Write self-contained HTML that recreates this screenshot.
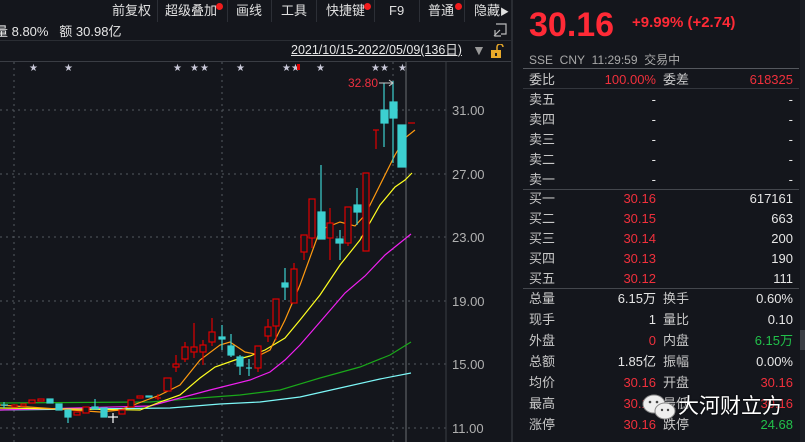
<!DOCTYPE html>
<html><head><meta charset="utf-8">
<style>
*{margin:0;padding:0;box-sizing:border-box}
body{width:805px;height:442px;background:#14161c;overflow:hidden;position:relative;font-family:"Liberation Sans","Noto Sans CJK SC",sans-serif;color:#d8d8d8}
.t{position:absolute;white-space:nowrap;font-size:13px;line-height:16px}
.tb{color:#e0e0e0}
.sep{position:absolute;top:0;width:1px;height:22px;background:#2c2f36}
.dot{position:absolute;width:7px;height:7px;border-radius:50%;background:#f01c1c}
.r{color:#f0303c}.g{color:#22c04a}.w{color:#e6e6e6}.gy{color:#a8a8a8}
.lbl{color:#c8c8c8}
.hl{position:absolute;height:1px;background:#33363d}
</style></head><body>
<!-- toolbar -->
<div class="t tb" style="left:112px;top:3px">前复权</div>
<div class="sep" style="left:157px"></div>
<div class="t tb" style="left:165px;top:3px">超级叠加</div><div class="dot" style="left:216px;top:3px"></div>
<div class="sep" style="left:227px"></div>
<div class="t tb" style="left:236px;top:3px">画线</div>
<div class="sep" style="left:271px"></div>
<div class="t tb" style="left:281px;top:3px">工具</div>
<div class="sep" style="left:316px"></div>
<div class="t tb" style="left:326px;top:3px">快捷键</div><div class="dot" style="left:364px;top:3px"></div>
<div class="sep" style="left:374px"></div>
<div class="t tb" style="left:389px;top:3px">F9</div>
<div class="sep" style="left:419px"></div>
<div class="t tb" style="left:428px;top:3px">普通</div><div class="dot" style="left:455px;top:3px"></div>
<div class="sep" style="left:464px"></div>
<div class="t tb" style="left:474px;top:3px">隐藏<span style="font-size:9px">▶</span></div>
<div class="t w" style="left:-5px;top:24px">量 8.80%&nbsp;&nbsp; 额 30.98亿</div>
<svg style="position:absolute;left:492px;top:22px" width="16" height="16"><path d="M4 2h10v10h-5M2 14l6-6M3 8v6h6" stroke="#bbb" fill="none" stroke-width="1.2"/></svg>
<div class="hl" style="left:0;top:40px;width:512px;background:#2a2d33"></div>
<div class="t w" style="left:291px;top:42px;text-decoration:underline;font-size:12.5px">2021/10/15-2022/05/09(136日)</div>
<div class="t" style="left:472px;top:42px;color:#999;font-size:14px">▼</div>
<svg style="position:absolute;left:490px;top:44px" width="16" height="16"><path d="M7 6V3a3 3 0 0 1 6 0" stroke="#e8a92a" fill="none" stroke-width="1.5"/><rect x="1" y="6" width="10" height="8" fill="#e8a92a"/><rect x="5" y="9" width="2" height="3" fill="#222"/></svg>
<div class="hl" style="left:0;top:61px;width:512px;background:#3a3d44"></div>
<div style="position:absolute;left:511px;top:0;width:2px;height:442px;background:#2a2d33"></div>

<svg style="position:absolute;left:0;top:62px" width="511" height="380" viewBox="0 62 511 380">
<g stroke="#555a60" stroke-dasharray="2,4" stroke-width="1">
<line x1="0" y1="110" x2="446" y2="110"/><line x1="0" y1="174" x2="446" y2="174"/><line x1="0" y1="237" x2="446" y2="237"/><line x1="0" y1="301" x2="446" y2="301"/><line x1="0" y1="364" x2="446" y2="364"/><line x1="0" y1="428" x2="446" y2="428"/>
<line x1="14" y1="62" x2="14" y2="442"/><line x1="222" y1="62" x2="222" y2="442"/><line x1="393" y1="62" x2="393" y2="442"/>
</g>
<line x1="446" y1="62" x2="446" y2="442" stroke="#3a3d44"/>
<line x1="406" y1="62" x2="406" y2="442" stroke="#6a6d72"/>
<g font-family="Liberation Sans" font-size="13" fill="#b0b0b0">
<text x="452" y="115">31.00</text><text x="452" y="179">27.00</text><text x="452" y="242">23.00</text><text x="452" y="306">19.00</text><text x="452" y="369">15.00</text><text x="452" y="433">11.00</text>
</g>
<g fill="#c8c8d8" font-size="10" font-family="DejaVu Sans">
<text x="29" y="71">★</text><text x="64" y="71">★</text><text x="173" y="71">★</text><text x="190" y="71">★</text><text x="200" y="71">★</text><text x="236" y="71">★</text><text x="282" y="71">★</text><text x="291" y="71">★</text><text x="316" y="71">★</text><text x="371" y="71">★</text><text x="380" y="71">★</text><text x="398" y="71">★</text>
</g>
<rect x="297" y="64" width="3" height="6" fill="#d00"/>
<!-- MAs -->
<g fill="none" stroke-width="1.2">
<polyline stroke="#7df8f8" points="0,410 170,408 220,404 260,402 300,397 340,388 380,379 411,373"/>
<polyline stroke="#1aa81a" points="0,403 150,402 200,398 240,395 280,390 320,378 360,367 390,355 411,342"/>
<polyline stroke="#f020f0" points="0,410 150,406 180,398 210,390 250,380 270,372 285,360 300,345 320,322 345,293 365,276 385,255 411,234"/>
<polyline stroke="#ffff20" points="0,408 140,410 160,402 180,395 200,378 215,367 235,360 250,356 265,350 285,338 300,320 320,295 340,265 360,240 380,205 395,187 405,180 412,173"/>
<polyline stroke="#ff9a10" points="0,405 100,412 120,410 160,395 180,385 200,360 220,345 230,342 245,352 260,355 270,350 285,320 300,285 320,230 340,222 355,226 365,215 380,185 395,155 405,138 415,130"/>
</g>
<!-- candles -->
<g stroke="#e00000" fill="#14161c" stroke-width="1.2">
<rect x="12" y="405" width="5" height="2"/><rect x="21" y="404" width="5" height="2"/><rect x="29" y="400" width="6" height="3"/><rect x="38" y="399" width="6" height="2"/>
<rect x="74" y="412" width="6" height="3"/><rect x="83" y="407" width="6" height="6"/><rect x="119" y="410" width="6" height="4"/><rect x="128" y="400" width="6" height="7"/><rect x="137" y="396" width="6" height="2"/>
<line x1="158" y1="394" x2="158" y2="400"/><line x1="155" y1="398" x2="161" y2="398"/>
<rect x="164" y="378" width="7" height="13"/><line x1="176" y1="355" x2="176" y2="372"/><rect x="173" y="364" width="6" height="3"/>
<line x1="185" y1="342" x2="185" y2="362"/><rect x="182" y="347" width="6" height="12"/>
<line x1="194" y1="323" x2="194" y2="358"/><rect x="191" y="347" width="6" height="5"/>
<line x1="203" y1="340" x2="203" y2="365"/><rect x="200" y="345" width="6" height="7"/>
<line x1="212" y1="318" x2="212" y2="346"/><rect x="209" y="332" width="6" height="10"/>
<line x1="258" y1="346" x2="258" y2="372"/><rect x="255" y="346" width="6" height="22"/>
<line x1="268" y1="319" x2="268" y2="342"/><rect x="265" y="327" width="6" height="9"/>
<line x1="276" y1="299" x2="276" y2="340"/><rect x="273" y="299" width="6" height="27"/>
<line x1="294" y1="263" x2="294" y2="303"/><rect x="291" y="269" width="6" height="34"/>
<line x1="304" y1="235" x2="304" y2="260"/><rect x="301" y="235" width="6" height="17"/>
<line x1="312" y1="199" x2="312" y2="248"/><rect x="309" y="199" width="6" height="39"/>
<line x1="330" y1="208" x2="330" y2="260"/><rect x="327" y="223" width="6" height="15"/>
<line x1="348" y1="207" x2="348" y2="246"/><rect x="345" y="207" width="6" height="36"/>
<rect x="363" y="173" width="6" height="78"/>
<line x1="376" y1="130" x2="376" y2="149"/><line x1="373" y1="130" x2="379" y2="130"/>
<line x1="408" y1="123" x2="415" y2="123"/>
</g>
<g stroke="#3cd0d0" fill="#3cd0d0" stroke-width="1.2">
<line x1="1" y1="405" x2="8" y2="405"/><line x1="4" y1="402" x2="4" y2="408"/>
<rect x="47" y="399" width="6" height="4"/><rect x="56" y="404" width="6" height="6"/>
<line x1="68" y1="410" x2="68" y2="423"/><rect x="65" y="410" width="6" height="7"/>
<line x1="95" y1="399" x2="95" y2="409"/><rect x="92" y="407" width="6" height="2"/>
<rect x="101" y="408" width="6" height="9"/><rect x="146" y="396" width="6" height="1"/>
<line x1="222" y1="325" x2="222" y2="350"/><rect x="219" y="337" width="6" height="2"/>
<line x1="231" y1="334" x2="231" y2="357"/><rect x="228" y="346" width="6" height="9"/>
<line x1="240" y1="355" x2="240" y2="375"/><rect x="237" y="357" width="6" height="9"/>
<line x1="249" y1="359" x2="249" y2="376"/><line x1="246" y1="368" x2="252" y2="368"/>
<line x1="285" y1="268" x2="285" y2="300"/><rect x="282" y="283" width="6" height="4"/>
<line x1="321" y1="165" x2="321" y2="239"/><rect x="318" y="212" width="7" height="27"/>
<line x1="340" y1="230" x2="340" y2="260"/><rect x="336" y="239" width="7" height="4"/>
<line x1="357" y1="188" x2="357" y2="225"/><rect x="354" y="205" width="7" height="7"/>
<line x1="384" y1="83" x2="384" y2="147"/><rect x="381" y="110" width="7" height="13"/>
<line x1="393" y1="81" x2="393" y2="163"/><rect x="390" y="102" width="7" height="16"/>
<rect x="398" y="125" width="8" height="42"/>
</g>
<g stroke="#fff" stroke-width="1.2"><line x1="113" y1="413" x2="113" y2="423"/><line x1="108" y1="417" x2="118" y2="417"/></g>
<text x="348" y="87" font-family="Liberation Sans" font-size="12" fill="#f03040">32.80</text>
<path d="M379 83H393M389 80l4 3-4 3" stroke="#ccc" fill="none"/>
</svg>

<!-- right panel -->
<div class="t r" style="left:529px;top:6px;font-size:34px;line-height:38px;font-weight:bold;color:#ff2a36">30.16</div>
<div class="t r" style="left:632px;top:15px;font-size:15px;font-weight:bold;color:#ff2a36">+9.99% (+2.74)</div>
<div class="t gy" style="left:529px;top:52px;font-size:12px">SSE&nbsp; CNY&nbsp; 11:29:59&nbsp; 交易中</div>
<div class="hl" style="left:523px;top:68px;width:276px;background:#55585e"></div>
<div class="hl" style="left:523px;top:88px;width:276px"></div>
<div class="hl" style="left:523px;top:189px;width:276px;background:#44474d"></div>
<div class="hl" style="left:523px;top:288px;width:276px;background:#44474d"></div>
<div style="position:absolute;left:800px;top:0;width:5px;height:442px;background:#1b1e24"></div>
<div style="position:absolute;left:800px;top:330px;width:5px;height:20px;background:#3a3d44"></div>
<div id="rows"></div>
<div style="position:absolute;left:0;top:0">
<!-- 委比 -->
<div class="t lbl" style="left:529px;top:72px">委比</div><div class="t r" style="left:600px;width:56px;top:72px;text-align:right">100.00%</div><div class="t lbl" style="left:663px;top:72px">委差</div><div class="t r" style="left:700px;width:93px;top:72px;text-align:right">618325</div>
<div class="t lbl" style="left:529px;top:92px">卖五</div><div class="t w" style="left:640px;width:16px;top:92px;text-align:right">-</div><div class="t w" style="left:700px;width:93px;top:92px;text-align:right">-</div>
<div class="t lbl" style="left:529px;top:112px">卖四</div><div class="t w" style="left:640px;width:16px;top:112px;text-align:right">-</div><div class="t w" style="left:700px;width:93px;top:112px;text-align:right">-</div>
<div class="t lbl" style="left:529px;top:132px">卖三</div><div class="t w" style="left:640px;width:16px;top:132px;text-align:right">-</div><div class="t w" style="left:700px;width:93px;top:132px;text-align:right">-</div>
<div class="t lbl" style="left:529px;top:152px">卖二</div><div class="t w" style="left:640px;width:16px;top:152px;text-align:right">-</div><div class="t w" style="left:700px;width:93px;top:152px;text-align:right">-</div>
<div class="t lbl" style="left:529px;top:172px">卖一</div><div class="t w" style="left:640px;width:16px;top:172px;text-align:right">-</div><div class="t w" style="left:700px;width:93px;top:172px;text-align:right">-</div>
<div class="t lbl" style="left:529px;top:191px">买一</div><div class="t r" style="left:600px;width:56px;top:191px;text-align:right">30.16</div><div class="t w" style="left:700px;width:93px;top:191px;text-align:right">617161</div>
<div class="t lbl" style="left:529px;top:211px">买二</div><div class="t r" style="left:600px;width:56px;top:211px;text-align:right">30.15</div><div class="t w" style="left:700px;width:93px;top:211px;text-align:right">663</div>
<div class="t lbl" style="left:529px;top:231px">买三</div><div class="t r" style="left:600px;width:56px;top:231px;text-align:right">30.14</div><div class="t w" style="left:700px;width:93px;top:231px;text-align:right">200</div>
<div class="t lbl" style="left:529px;top:251px">买四</div><div class="t r" style="left:600px;width:56px;top:251px;text-align:right">30.13</div><div class="t w" style="left:700px;width:93px;top:251px;text-align:right">190</div>
<div class="t lbl" style="left:529px;top:271px">买五</div><div class="t r" style="left:600px;width:56px;top:271px;text-align:right">30.12</div><div class="t w" style="left:700px;width:93px;top:271px;text-align:right">111</div>

<div class="t lbl" style="left:529px;top:291px">总量</div><div class="t w" style="left:580px;width:76px;top:291px;text-align:right">6.15万</div><div class="t lbl" style="left:663px;top:291px">换手</div><div class="t w" style="left:700px;width:93px;top:291px;text-align:right">0.60%</div>
<div class="t lbl" style="left:529px;top:312px">现手</div><div class="t w" style="left:580px;width:76px;top:312px;text-align:right">1</div><div class="t lbl" style="left:663px;top:312px">量比</div><div class="t w" style="left:700px;width:93px;top:312px;text-align:right">0.10</div>
<div class="t lbl" style="left:529px;top:333px">外盘</div><div class="t r" style="left:580px;width:76px;top:333px;text-align:right">0</div><div class="t lbl" style="left:663px;top:333px">内盘</div><div class="t g" style="left:700px;width:93px;top:333px;text-align:right">6.15万</div>
<div class="t lbl" style="left:529px;top:354px">总额</div><div class="t w" style="left:580px;width:76px;top:354px;text-align:right">1.85亿</div><div class="t lbl" style="left:663px;top:354px">振幅</div><div class="t w" style="left:700px;width:93px;top:354px;text-align:right">0.00%</div>
<div class="t lbl" style="left:529px;top:375px">均价</div><div class="t r" style="left:580px;width:76px;top:375px;text-align:right">30.16</div><div class="t lbl" style="left:663px;top:375px">开盘</div><div class="t r" style="left:700px;width:93px;top:375px;text-align:right">30.16</div>
<div class="t lbl" style="left:529px;top:396px">最高</div><div class="t r" style="left:580px;width:76px;top:396px;text-align:right">30.16</div><div class="t lbl" style="left:663px;top:396px">最低</div><div class="t r" style="left:700px;width:93px;top:396px;text-align:right">30.16</div>
<div class="t lbl" style="left:529px;top:417px">涨停</div><div class="t r" style="left:580px;width:76px;top:417px;text-align:right">30.16</div><div class="t lbl" style="left:663px;top:417px">跌停</div><div class="t g" style="left:700px;width:93px;top:417px;text-align:right">24.68</div>
</div>
<!-- watermark -->
<svg style="position:absolute;left:641px;top:393px" width="42" height="30"><ellipse cx="13" cy="11" rx="11" ry="9" fill="#eee" stroke="#888"/><ellipse cx="24" cy="18" rx="10" ry="8" fill="#eee" stroke="#888"/><circle cx="9" cy="9" r="1.3" fill="#444"/><circle cx="16" cy="9" r="1.3" fill="#444"/><circle cx="21" cy="17" r="1.2" fill="#444"/><circle cx="27" cy="17" r="1.2" fill="#444"/></svg>
<div class="t" style="left:678px;top:394px;font-size:21px;line-height:26px;color:#fff;text-shadow:0 0 2px #000">大河财立方</div>
</body></html>
